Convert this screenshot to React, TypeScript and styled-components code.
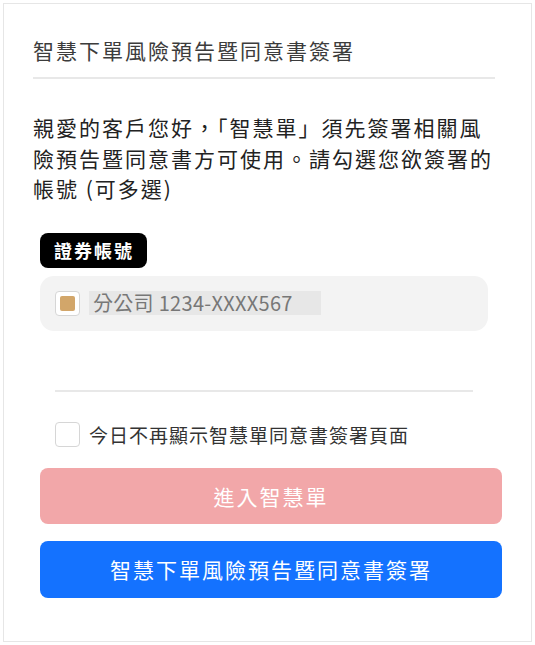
import React from 'react';
import styled, { createGlobalStyle } from 'styled-components';

const GlobalStyle = createGlobalStyle`
  html, body {
    margin: 0;
    padding: 0;
    background: #ffffff;
  }
  body {
    font-family: 'Noto Sans CJK TC', 'Noto Sans', sans-serif;
  }
`;

const Card = styled.div`
  box-sizing: border-box;
  margin: 3px;
  width: 529px;
  height: 639px;
  border: 1px solid #e6e6e6;
  background: #fff;
  padding-top: 31px;
`;

const Header = styled.section`
  padding: 0 36px 0 29px;
`;

const Title = styled.h1`
  margin: 0;
  font-size: 21px;
  font-weight: 400;
  line-height: 30px;
  letter-spacing: 2px;
  color: #3c3c3c;
`;

const Divider = styled.hr`
  margin: 12px 0 0;
  border: 0;
  border-top: 2px solid #e8e8e8;
`;

const Intro = styled.p`
  margin: 33px 0 0;
  font-size: 21px;
  line-height: 30.5px;
  letter-spacing: 2px;
  color: #222;
`;

const Body = styled.section`
  padding: 29px 29px 0 36px;
`;

const AccountGroup = styled.div`
  margin-right: 14px;
`;

const Badge = styled.div`
  display: inline-flex;
  align-items: center;
  height: 35px;
  padding: 0 13px 0 14px;
  border-radius: 8px;
  background: #000;
  color: #fff;
  font-size: 18px;
  font-weight: 700;
  letter-spacing: 2px;
`;

const AccountRow = styled.label`
  display: flex;
  align-items: center;
  gap: 9px;
  height: 55px;
  margin-top: 8px;
  padding: 0 15px;
  border-radius: 14px;
  background: #f3f3f3;
`;

const Box = styled.span<{ $checked?: boolean }>`
  box-sizing: border-box;
  flex: none;
  display: flex;
  align-items: center;
  justify-content: center;
  width: 25px;
  height: 25px;
  border: 1px solid #d6d6d6;
  border-radius: 4px;
  background: #fff;

  &::after {
    content: '';
    display: ${(p) => (p.$checked ? 'block' : 'none')};
    width: 15px;
    height: 15px;
    border-radius: 2px;
    background: #d2a66a;
  }
`;

const AccountText = styled.span`
  padding: 0 28px 0 4px;
  line-height: 24px;
  background: #e7e7e7;
  color: #777;
  font-family: 'Noto Sans CJK TC', 'Noto Sans', sans-serif;
  font-size: 20px;
  letter-spacing: 0.3px;
`;

const SplitLine = styled.hr`
  margin: 59px 15px 0;
  border: 0;
  border-top: 2px solid #e8e8e8;
`;

const SkipRow = styled.label`
  display: flex;
  align-items: center;
  gap: 9px;
  margin: 29px 0 0 15px;
  font-size: 19px;
  letter-spacing: 1px;
  color: #333;
`;

const ActionButton = styled.button<{ $variant: 'pink' | 'blue' }>`
  display: block;
  width: 100%;
  height: ${(p) => (p.$variant === 'pink' ? 56 : 57)}px;
  margin-top: ${(p) => (p.$variant === 'pink' ? 20 : 17)}px;
  border: 0;
  border-radius: 8px;
  background: ${(p) => (p.$variant === 'pink' ? '#f2a7a9' : '#1472ff')};
  color: #fff;
  font-family: 'Noto Sans CJK TC', 'Noto Sans', sans-serif;
  font-size: 21px;
  letter-spacing: 2px;
  cursor: pointer;
`;

const App = () => {
  const [accountChecked, setAccountChecked] = React.useState(true);
  const [skipToday, setSkipToday] = React.useState(false);

  return (
    <>
      <GlobalStyle />
      <Card>
        <Header>
          <Title>智慧下單風險預告暨同意書簽署</Title>
          <Divider />
          <Intro>
            親愛的客戶您好，「智慧單」須先簽署相關風險預告暨同意書方可使用。請勾選您欲簽署的帳號 (可多選)
          </Intro>
        </Header>
        <Body>
          <AccountGroup>
            <Badge>證券帳號</Badge>
            <AccountRow onClick={() => setAccountChecked(!accountChecked)}>
              <Box $checked={accountChecked} />
              <AccountText>分公司 1234-XXXX567</AccountText>
            </AccountRow>
            <SplitLine />
          </AccountGroup>
          <SkipRow onClick={() => setSkipToday(!skipToday)}>
            <Box $checked={skipToday} />
            今日不再顯示智慧單同意書簽署頁面
          </SkipRow>
          <ActionButton $variant='pink'>進入智慧單</ActionButton>
          <ActionButton $variant='blue'>智慧下單風險預告暨同意書簽署</ActionButton>
        </Body>
      </Card>
    </>
  );
};

export default App;
